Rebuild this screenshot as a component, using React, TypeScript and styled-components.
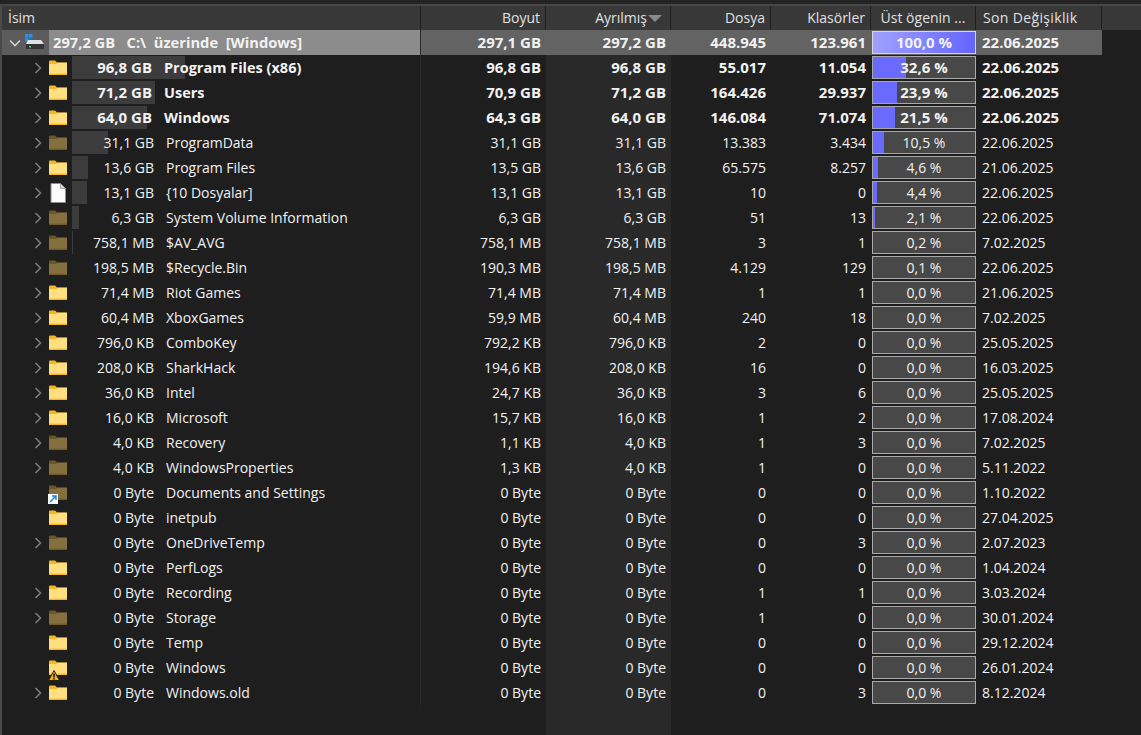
import React from 'react';
import styled, { createGlobalStyle } from 'styled-components';

const Global = createGlobalStyle`
  html, body { margin: 0; padding: 0; height: 100%; background: #1e1e1e; overflow: hidden; }
  #root { height: 100%; }
`;

const Window = styled.div`
  height: 735px;
  display: flex;
  flex-direction: column;
  background: #1e1e1e;
  border-left: 2px solid #4a4a4a;
  box-sizing: border-box;
  font-family: "Open Sans", "Noto Sans", sans-serif;
  font-size: 14px;
  color: #f2f2f2;
`;
const TopStrip = styled.div`
  height: 6px;
  margin-left: -2px;
  background: #232323;
  border-bottom: 2px solid #474747;
  box-sizing: border-box;
  flex: none;
`;
const HeaderRow = styled.div`
  display: grid;
  grid-template-columns: 419px 125px 125px 100px 100px 105px 126px 39px;
  height: 24px;
  flex: none;
  background: #383838;
  color: #e0e0e0;
  font-size: 14px;
  line-height: 24px;
`;
const HeaderCell = styled.div<{ $align?: string; $wide?: boolean }>`
  border-right: 1px solid #1f1f1f;
  box-sizing: border-box;
  padding: ${p => (p.$align === 'left' ? `0 0 0 ${p.$wide ? 7 : 6}px` : p.$align === 'center' ? '0' : '0 5px 0 0')};
  white-space: nowrap;
  display: flex;
  letter-spacing: ${p => (p.$wide ? '0.35px' : 'normal')};
  justify-content: ${p => (p.$align === 'left' ? 'flex-start' : p.$align === 'center' ? 'center' : 'flex-end')};
  align-items: center;
  gap: 1px;
  &:last-child { border-right: 0; }
`;
const SortArrow = styled.span`
  width: 0;
  height: 0;
  border-left: 7px solid transparent;
  border-right: 7px solid transparent;
  border-top: 7px solid #8a8a8a;
  margin-right: 3px;
`;
const Row = styled.div<{ $root?: boolean; $bold?: boolean }>`
  display: grid;
  grid-template-columns: 419px 125px 125px 100px 100px 105px 126px;
  width: 1100px;
  height: 25px;
  flex: none;
  line-height: 25px;
  font-weight: ${p => (p.$bold ? 700 : 400)};
  font-size: ${p => (p.$bold ? '15px' : '14px')};
  background: ${p => (p.$root ? '#636363' : 'transparent')};
  white-space: nowrap;
`;
const NameCell = styled.div`
  position: relative;
  display: flex;
  align-items: center;
  border-right: 1px solid #2a2a2a;
  box-sizing: border-box;
  height: 25px;
`;
const Twisty = styled.span`
  width: 14px;
  margin-left: 29px;
  flex: none;
  display: flex;
  justify-content: center;
  align-items: center;
  color: #7c7c7c;
`;
const IconSlot = styled.span`
  position: relative;
  width: 20px;
  height: 20px;
  margin-left: 3px;
  flex: none;
  display: flex;
  align-items: center;
  justify-content: center;
`;
const SizeBox = styled.span`
  position: relative;
  width: 345px;
  margin-left: 4px;
  flex: none;
  height: 23px;
  display: block;
`;
const SizeBar = styled.span`
  position: absolute;
  left: 0;
  top: 0;
  bottom: 0;
  background: #3c3c3c;
`;
const SizeLabel = styled.span<{ $bold?: boolean }>`
  position: absolute;
  left: 0;
  width: ${p => (p.$bold ? 80 : 82)}px;
  text-align: right;
  top: 0;
  line-height: 23px;
`;
const NameLabel = styled.span<{ $bold?: boolean }>`
  position: absolute;
  left: ${p => (p.$bold ? 92 : 94)}px;
  top: 0;
  line-height: 23px;
  font-size: ${p => (p.$bold ? '14.5px' : '14px')};
`;
const RootName = styled.div`
  flex: 1;
  height: 25px;
  background: #8c8c8c;
  padding-left: 4px;
  line-height: 25px;
  font-size: 14.7px;
  white-space: pre;
`;
const RootLead = styled.div`
  display: flex;
  align-items: center;
  width: 47px;
  flex: none;
  height: 25px;
  background: #5c5c5c;
`;
const RootTwisty = styled.span`
  width: 14px;
  margin-left: 6px;
  display: flex;
  justify-content: center;
  color: #cfcfcf;
`;
const Num = styled.div<{ $sorted?: boolean }>`
  text-align: right;
  padding-right: 5px;
  box-sizing: border-box;
  background: ${p => (p.$sorted ? '#292929' : 'transparent')};
`;
const DateCell = styled.div`
  padding-left: 6px;
`;
const PctCell = styled.div`
  display: flex;
  align-items: center;
  padding-left: 1px;
`;
const PctBar = styled.div<{ $root?: boolean }>`
  position: relative;
  width: 104px;
  height: 23px;
  box-sizing: border-box;
  border: 1px solid ${p => (p.$root ? '#d8d8d8' : '#a8a8a8')};
  background: #484848;
  text-align: center;
  line-height: 21px;
  overflow: hidden;
`;
const PctFill = styled.div<{ $root?: boolean }>`
  position: absolute;
  left: 0;
  top: 0;
  bottom: 0;
  background: ${p => (p.$root ? 'linear-gradient(90deg, #a0a0ff, #8c8cff 35%, #6464ff)' : '#6a6aff')};
`;
const PctText = styled.span`
  position: relative;
`;
const Filler = styled.div`
  flex: 1;
  display: grid;
  grid-template-columns: 419px 125px 125px;
`;
const FillerSorted = styled.div`
  grid-column: 3;
  background: #292929;
`;
const Shortcut = styled.span`
  position: absolute;
  left: 0;
  bottom: -1px;
  width: 10px;
  height: 10px;
  background: #fff;
  display: flex;
  align-items: center;
  justify-content: center;
`;
const Warning = styled.span`
  position: absolute;
  left: 0;
  bottom: -3px;
  display: flex;
`;

const Chevron = ({ down }: { down?: boolean }) => (
  <svg width="12" height="12" viewBox="0 0 12 12" fill="none" stroke="currentColor" strokeWidth="1.6">
    {down ? <path d="M1 3.5 L6 8.5 L11 3.5" /> : <path d="M3.5 1 L8.5 6 L3.5 11" />}
  </svg>
);

const Folder = ({ dim }: { dim?: boolean }) => (
  <svg width="18" height="15" viewBox="0 0 18 15">
    <path d="M0 1.5 Q0 0.5 1 0.5 H6 L8 2.5 H18 V14 Q18 15 17 15 H1 Q0 15 0 14 Z" fill={dim ? '#6b5626' : '#f4b625'} />
    <path d="M0 4 H7 L8.5 2.8 H18 V14 Q18 15 17 15 H1 Q0 15 0 14 Z" fill={dim ? '#84703f' : '#ffdf80'} />
    <rect x="0" y="13.6" width="18" height="1.4" fill={dim ? '#6f5a28' : '#f4b625'} />
  </svg>
);

const FileIcon = () => (
  <svg width="16" height="20" viewBox="0 0 16 20">
    <path d="M1 0.5 H10.5 L15.5 5.5 V19.5 H1 Z" fill="#fcfcfc" stroke="#8d8d8d" />
    <path d="M10.5 0.5 V5.5 H15.5 Z" fill="#d8d8d8" stroke="#8d8d8d" strokeWidth="0.7" />
  </svg>
);

const DriveIcon = () => (
  <svg width="20" height="18" viewBox="0 0 20 18">
    <rect x="0" y="0" width="3.5" height="3.5" fill="#2a8fe6" />
    <rect x="4" y="0" width="3.5" height="3.5" fill="#2a8fe6" />
    <rect x="0" y="4" width="3.5" height="3.5" fill="#2a8fe6" />
    <rect x="4" y="4" width="3.5" height="3.5" fill="#1f70c0" />
    <path d="M3 6 H16 L19 10 H1 Z" fill="#e0e0e0" />
    <rect x="1" y="10" width="18" height="5" fill="#333" />
    <rect x="4" y="12" width="2" height="1.5" fill="#4fd06a" />
  </svg>
);

type Item = {
  size: string; name: string; boyut: string; ayr: string; dosya: string; klas: string;
  pct: string; date: string; bar: number; fill: number; twisty?: boolean; dim?: boolean; bold?: boolean;
  kind?: 'file' | 'shortcut' | 'warning';
};

const items: Item[] = [
  { size: '96,8 GB', name: 'Program Files (x86)', boyut: '96,8 GB', ayr: '96,8 GB', dosya: '55.017', klas: '11.054', pct: '32,6 %', date: '22.06.2025', bar: 113, fill: 33, twisty: true, bold: true },
  { size: '71,2 GB', name: 'Users', boyut: '70,9 GB', ayr: '71,2 GB', dosya: '164.426', klas: '29.937', pct: '23,9 %', date: '22.06.2025', bar: 83, fill: 24, twisty: true, bold: true },
  { size: '64,0 GB', name: 'Windows', boyut: '64,3 GB', ayr: '64,0 GB', dosya: '146.084', klas: '71.074', pct: '21,5 %', date: '22.06.2025', bar: 75, fill: 22, twisty: true, bold: true },
  { size: '31,1 GB', name: 'ProgramData', boyut: '31,1 GB', ayr: '31,1 GB', dosya: '13.383', klas: '3.434', pct: '10,5 %', date: '22.06.2025', bar: 36, fill: 11, twisty: true, dim: true },
  { size: '13,6 GB', name: 'Program Files', boyut: '13,5 GB', ayr: '13,6 GB', dosya: '65.575', klas: '8.257', pct: '4,6 %', date: '21.06.2025', bar: 16, fill: 5, twisty: true },
  { size: '13,1 GB', name: '{10 Dosyalar]', boyut: '13,1 GB', ayr: '13,1 GB', dosya: '10', klas: '0', pct: '4,4 %', date: '22.06.2025', bar: 15, fill: 4, twisty: true, kind: 'file' },
  { size: '6,3 GB', name: 'System Volume Information', boyut: '6,3 GB', ayr: '6,3 GB', dosya: '51', klas: '13', pct: '2,1 %', date: '22.06.2025', bar: 7, fill: 2, twisty: true, dim: true },
  { size: '758,1 MB', name: '$AV_AVG', boyut: '758,1 MB', ayr: '758,1 MB', dosya: '3', klas: '1', pct: '0,2 %', date: '7.02.2025', bar: 1, fill: 0, twisty: true, dim: true },
  { size: '198,5 MB', name: '$Recycle.Bin', boyut: '190,3 MB', ayr: '198,5 MB', dosya: '4.129', klas: '129', pct: '0,1 %', date: '22.06.2025', bar: 0, fill: 0, twisty: true, dim: true },
  { size: '71,4 MB', name: 'Riot Games', boyut: '71,4 MB', ayr: '71,4 MB', dosya: '1', klas: '1', pct: '0,0 %', date: '21.06.2025', bar: 0, fill: 0, twisty: true },
  { size: '60,4 MB', name: 'XboxGames', boyut: '59,9 MB', ayr: '60,4 MB', dosya: '240', klas: '18', pct: '0,0 %', date: '7.02.2025', bar: 0, fill: 0, twisty: true },
  { size: '796,0 KB', name: 'ComboKey', boyut: '792,2 KB', ayr: '796,0 KB', dosya: '2', klas: '0', pct: '0,0 %', date: '25.05.2025', bar: 0, fill: 0, twisty: true },
  { size: '208,0 KB', name: 'SharkHack', boyut: '194,6 KB', ayr: '208,0 KB', dosya: '16', klas: '0', pct: '0,0 %', date: '16.03.2025', bar: 0, fill: 0, twisty: true },
  { size: '36,0 KB', name: 'Intel', boyut: '24,7 KB', ayr: '36,0 KB', dosya: '3', klas: '6', pct: '0,0 %', date: '25.05.2025', bar: 0, fill: 0, twisty: true },
  { size: '16,0 KB', name: 'Microsoft', boyut: '15,7 KB', ayr: '16,0 KB', dosya: '1', klas: '2', pct: '0,0 %', date: '17.08.2024', bar: 0, fill: 0, twisty: true },
  { size: '4,0 KB', name: 'Recovery', boyut: '1,1 KB', ayr: '4,0 KB', dosya: '1', klas: '3', pct: '0,0 %', date: '7.02.2025', bar: 0, fill: 0, twisty: true, dim: true },
  { size: '4,0 KB', name: 'WindowsProperties', boyut: '1,3 KB', ayr: '4,0 KB', dosya: '1', klas: '0', pct: '0,0 %', date: '5.11.2022', bar: 0, fill: 0, twisty: true, dim: true },
  { size: '0 Byte', name: 'Documents and Settings', boyut: '0 Byte', ayr: '0 Byte', dosya: '0', klas: '0', pct: '0,0 %', date: '1.10.2022', bar: 0, fill: 0, dim: true, kind: 'shortcut' },
  { size: '0 Byte', name: 'inetpub', boyut: '0 Byte', ayr: '0 Byte', dosya: '0', klas: '0', pct: '0,0 %', date: '27.04.2025', bar: 0, fill: 0 },
  { size: '0 Byte', name: 'OneDriveTemp', boyut: '0 Byte', ayr: '0 Byte', dosya: '0', klas: '3', pct: '0,0 %', date: '2.07.2023', bar: 0, fill: 0, twisty: true, dim: true },
  { size: '0 Byte', name: 'PerfLogs', boyut: '0 Byte', ayr: '0 Byte', dosya: '0', klas: '0', pct: '0,0 %', date: '1.04.2024', bar: 0, fill: 0 },
  { size: '0 Byte', name: 'Recording', boyut: '0 Byte', ayr: '0 Byte', dosya: '1', klas: '1', pct: '0,0 %', date: '3.03.2024', bar: 0, fill: 0, twisty: true },
  { size: '0 Byte', name: 'Storage', boyut: '0 Byte', ayr: '0 Byte', dosya: '1', klas: '0', pct: '0,0 %', date: '30.01.2024', bar: 0, fill: 0, twisty: true, dim: true },
  { size: '0 Byte', name: 'Temp', boyut: '0 Byte', ayr: '0 Byte', dosya: '0', klas: '0', pct: '0,0 %', date: '29.12.2024', bar: 0, fill: 0 },
  { size: '0 Byte', name: 'Windows', boyut: '0 Byte', ayr: '0 Byte', dosya: '0', klas: '0', pct: '0,0 %', date: '26.01.2024', bar: 0, fill: 0, kind: 'warning' },
  { size: '0 Byte', name: 'Windows.old', boyut: '0 Byte', ayr: '0 Byte', dosya: '0', klas: '3', pct: '0,0 %', date: '8.12.2024', bar: 0, fill: 0, twisty: true },
];

export default function App() {
  return (
    <Window>
      <Global />
      <TopStrip />
      <HeaderRow>
        <HeaderCell $align="left">İsim</HeaderCell>
        <HeaderCell>Boyut</HeaderCell>
        <HeaderCell>Ayrılmış<SortArrow /></HeaderCell>
        <HeaderCell>Dosya</HeaderCell>
        <HeaderCell>Klasörler</HeaderCell>
        <HeaderCell $align="center">Üst ögenin ...</HeaderCell>
        <HeaderCell $align="left" $wide>Son Değişiklik</HeaderCell>
        <HeaderCell />
      </HeaderRow>
      <Row $root $bold>
        <NameCell>
          <RootLead>
            <RootTwisty><Chevron down /></RootTwisty>
            <IconSlot><DriveIcon /></IconSlot>
          </RootLead>
          <RootName>297,2 GB   C:\  üzerinde  [Windows]</RootName>
        </NameCell>
        <Num>297,1 GB</Num>
        <Num>297,2 GB</Num>
        <Num>448.945</Num>
        <Num>123.961</Num>
        <PctCell>
          <PctBar $root>
            <PctFill $root style={{ width: '100%' }} />
            <PctText>100,0 %</PctText>
          </PctBar>
        </PctCell>
        <DateCell>22.06.2025</DateCell>
      </Row>
      {items.map((it, i) => (
        <Row key={i} $bold={it.bold}>
          <NameCell>
            <Twisty>{it.twisty && <Chevron />}</Twisty>
            <IconSlot>
              {it.kind === 'file' ? <FileIcon /> : <Folder dim={it.dim} />}
              {it.kind === 'shortcut' && (
                <Shortcut>
                  <svg width="8" height="8" viewBox="0 0 8 8" fill="none" stroke="#1f7fe0" strokeWidth="1.4">
                    <path d="M1 7 L6.5 1.5 M3 1 H7 V5" />
                  </svg>
                </Shortcut>
              )}
              {it.kind === 'warning' && (
                <Warning>
                  <svg width="12" height="11" viewBox="0 0 12 11">
                    <path d="M6 0.5 L11.5 10.5 H0.5 Z" fill="#f3b01c" stroke="#2a2000" strokeWidth="1" />
                    <rect x="5.2" y="3.5" width="1.6" height="4" fill="#1c1c1c" />
                    <rect x="5.2" y="8.2" width="1.6" height="1.4" fill="#1c1c1c" />
                  </svg>
                </Warning>
              )}
            </IconSlot>
            <SizeBox>
              {it.bar > 0 && <SizeBar style={{ width: it.bar }} />}
              <SizeLabel $bold={it.bold}>{it.size}</SizeLabel>
              <NameLabel $bold={it.bold}>{it.name}</NameLabel>
            </SizeBox>
          </NameCell>
          <Num>{it.boyut}</Num>
          <Num $sorted>{it.ayr}</Num>
          <Num>{it.dosya}</Num>
          <Num>{it.klas}</Num>
          <PctCell>
            <PctBar>
              {it.fill > 0 && <PctFill style={{ width: it.fill }} />}
              <PctText>{it.pct}</PctText>
            </PctBar>
          </PctCell>
          <DateCell>{it.date}</DateCell>
        </Row>
      ))}
      <Filler><div /><div /><FillerSorted /></Filler>
    </Window>
  );
}
